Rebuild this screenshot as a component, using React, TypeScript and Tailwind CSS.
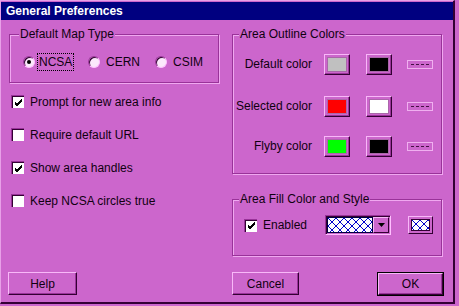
import React from "react";

function Hatch({ w, h }: { w: number; h: number }) {
  const id = `hatch-${w}-${h}`;
  return (
    <svg width={w} height={h} className="block">
      <defs>
        <pattern id={id} width="8" height="8" patternUnits="userSpaceOnUse">
          <rect width="8" height="8" fill="#ffffff" />
          <path d="M0 0 L8 8 M8 0 L0 8" stroke="#0000cc" strokeWidth="1" />
        </pattern>
      </defs>
      <rect width={w} height={h} fill={`url(#${id})`} />
    </svg>
  );
}

function Check({ checked, label }: { checked?: boolean; label: string }) {
  return (
    <div className="flex items-center h-[13px]">
      <div className="w-[13px] h-[13px] bg-white border-t border-l border-[#993399] border-b-[#ffc0ff] border-r-[#ffc0ff] shadow-[inset_1px_1px_0_#330033] flex items-center justify-center">
        {checked && (
          <svg width="9" height="9" viewBox="0 0 9 9" className="block">
            <path d="M1 4 L3 6 L8 1 M1 5 L3 7 L8 2 M1 6 L3 8 L8 3" stroke="#000" strokeWidth="1" fill="none" />
          </svg>
        )}
      </div>
      <span className="ml-[6px] leading-[14px]">{label}</span>
    </div>
  );
}

function Radio({ checked, label, focus, w }: { checked?: boolean; label: string; focus?: boolean; w: string }) {
  return (
    <div className={`flex items-center ${w}`}>
      <div className="w-[12px] h-[12px] rounded-full bg-[#fbe8fb] border border-t-[#993399] border-l-[#993399] border-b-[#ffc0ff] border-r-[#ffc0ff] shadow-[inset_1px_1px_0_#330033] flex items-center justify-center">
        {checked && <div className="w-[4px] h-[4px] rounded-full bg-black" />}
      </div>
      <span
        className={
          focus
            ? "ml-[2px] px-[1px] border border-dotted border-black leading-[16px]"
            : "ml-[5px] border border-transparent leading-[16px]"
        }
      >
        {label}
      </span>
    </div>
  );
}

function Group({
  label,
  className,
  labelClass,
  children,
}: {
  label: string;
  className: string;
  labelClass: string;
  children?: React.ReactNode;
}) {
  return (
    <div className={`relative border border-[#993399] shadow-[1px_1px_0_#f0a8f0,inset_1px_1px_0_#f0a8f0] ${className}`}>
      <span className={`absolute -top-[8px] px-[1px] bg-[#cc66cc] leading-[14px] ${labelClass}`}>{label}</span>
      {children}
    </div>
  );
}

function Swatch({ color }: { color: string }) {
  return (
    <div className="w-[26px] h-[21px] border border-t-[#f8b8f8] border-l-[#f8b8f8] border-b-[#330033] border-r-[#330033] shadow-[inset_-1px_-1px_0_#993399] p-[2px]">
      <div className="w-full h-full border border-[#aa66aa]" style={{ background: color }} />
    </div>
  );
}

function LineSample() {
  return (
    <div className="w-[26px] h-[9px] border border-[#f0b0f0] flex items-center px-[3px]">
      <div className="w-full border-t border-dashed border-[#441144]" />
    </div>
  );
}

function ColorRow({ label, c1, c2, className }: { label: string; c1: string; c2: string; className: string }) {
  return (
    <div className={`flex items-center h-[22px] ${className}`}>
      <span className="w-[79px] text-right leading-[14px]">{label}</span>
      <div className="ml-[12px]">
        <Swatch color={c1} />
      </div>
      <div className="ml-[16px]">
        <Swatch color={c2} />
      </div>
      <div className="ml-[15px]">
        <LineSample />
      </div>
    </div>
  );
}

function Button({ label, def, className }: { label: string; def?: boolean; className: string }) {
  return (
    <div className={`${def ? "border border-black" : ""} ${className}`}>
      <div className="w-full h-full border border-t-[#f8b8f8] border-l-[#f8b8f8] border-b-[#330033] border-r-[#330033] shadow-[inset_-1px_-1px_0_#993399] flex items-center justify-center leading-[14px]">
        {label}
      </div>
    </div>
  );
}

export default function App() {
  return (
    <div
      className="w-[459px] h-[306px] bg-[#cc66cc] text-[12px] text-[#100010] overflow-hidden"
      style={{ fontFamily: '"Liberation Sans", Arial, sans-serif' }}
    >
      <div className="w-[455px] h-[304px] border-t border-l border-t-[#e8a0e8] border-l-[#e8a0e8] border-r-2 border-b-2 border-r-[#330033] border-b-[#330033] flex flex-col">
        <div className="mt-[1px] h-[18px] bg-[#000080] text-white font-bold flex items-center pl-[5px] leading-[14px]">
          General Preferences
        </div>
        <div className="flex pl-[8px] mt-[14px]">
          <div className="w-[210px] flex flex-col">
            <Group label="Default Map Type" labelClass="left-[9px]" className="h-[49px] w-[210px]">
              <div className="flex items-center pl-[13px] pt-[18px]">
                <Radio checked focus label="NCSA" w="w-[65px]" />
                <Radio label="CERN" w="w-[67px]" />
                <Radio label="CSIM" w="w-[60px]" />
              </div>
            </Group>
            <div className="flex flex-col ml-[2px] mt-[12px] gap-[20px]">
              <Check checked label="Prompt for new area info" />
              <Check label="Require default URL" />
              <Check checked label="Show area handles" />
              <Check label="Keep NCSA circles true" />
            </div>
          </div>
          <div className="ml-[13px] w-[210px] flex flex-col">
            <Group label="Area Outline Colors" labelClass="left-[6px]" className="h-[140px] w-[210px]">
              <ColorRow label="Default color" c1="#c0c0c0" c2="#000000" className="mt-[18px]" />
              <ColorRow label="Selected color" c1="#ff0000" c2="#ffffff" className="mt-[20px]" />
              <ColorRow label="Flyby color" c1="#00ff00" c2="#000000" className="mt-[18px]" />
            </Group>
            <Group label="Area Fill Color and Style" labelClass="left-[6px]" className="mt-[25px] h-[57px] w-[210px]">
              <div className="flex items-center h-[22px] mt-[14px]">
                <div className="w-[92px] pl-[11px]">
                  <Check checked label="Enabled" />
                </div>
                <div className="w-[66px] h-[20px] border border-t-[#993399] border-l-[#993399] border-b-[#ffc0ff] border-r-[#ffc0ff] shadow-[inset_1px_1px_0_#330033] flex p-[1px]">
                  <div className="flex-1 border border-[#000040] overflow-hidden">
                    <Hatch w={46} h={16} />
                  </div>
                  <div className="w-[16px] border border-t-[#f8b8f8] border-l-[#f8b8f8] border-b-[#330033] border-r-[#330033] flex items-center justify-center">
                    <svg width="7" height="4" viewBox="0 0 7 4" className="block">
                      <path d="M0 0 H7 L3.5 4 Z" fill="#000" />
                    </svg>
                  </div>
                </div>
                <div className="ml-[17px] w-[25px] h-[18px] border border-t-[#f8b8f8] border-l-[#f8b8f8] border-b-[#330033] border-r-[#330033] p-[2px]">
                  <div className="w-full h-full border border-[#330033] overflow-hidden">
                    <Hatch w={19} h={10} />
                  </div>
                </div>
              </div>
            </Group>
          </div>
        </div>
        <div className="flex pl-[7px] mt-[16px]">
          <Button label="Help" className="w-[69px] h-[23px]" />
          <Button label="Cancel" className="ml-[155px] w-[67px] h-[23px]" />
          <Button label="OK" def className="ml-[78px] w-[67px] h-[24px]" />
        </div>
      </div>
    </div>
  );
}
